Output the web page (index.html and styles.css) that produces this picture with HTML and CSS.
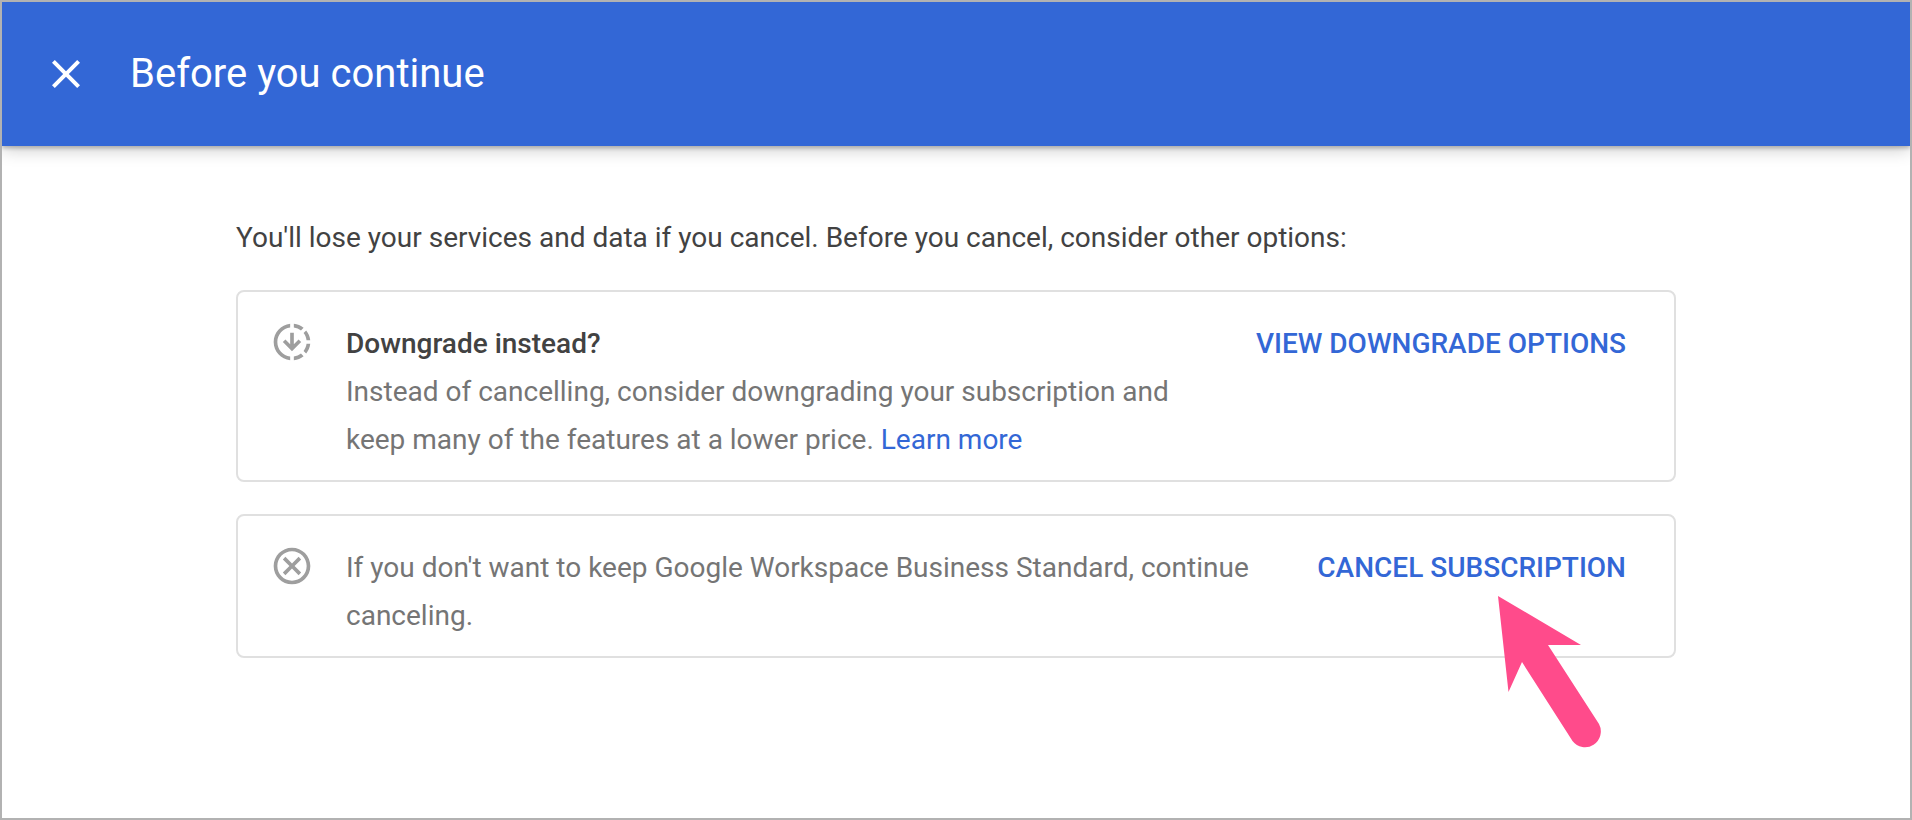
FILE: index.html
```
<!DOCTYPE html>
<html lang="en">
<head>
    <meta charset="UTF-8">
    <meta name="viewport" content="width=device-width, initial-scale=1.0">
    <title>Before you continue</title>
    <link rel="stylesheet" href="styles.css">
</head>
<body>
    <header class="header">
        <button class="close-button" type="button" aria-label="Close">
            <svg viewBox="0 0 24 24" aria-hidden="true">
                <path d="M19 6.41L17.59 5 12 10.59 6.41 5 5 6.41 10.59 12 5 17.59 6.41 19 12 13.41 17.59 19 19 17.59 13.41 12z"/>
            </svg>
        </button>
        <h1>Before you continue</h1>
    </header>

    <main class="content">
        <p class="intro">You'll lose your services and data if you cancel. Before you cancel, consider other options:</p>

        <!-- Downgrade option -->
        <section class="card">
            <svg class="card-icon" viewBox="0 0 24 24" aria-hidden="true">
                <path d="M18.32 4.26C16.84 3.05 15.01 2.25 13 2.05v2.02c1.46.18 2.79.76 3.9 1.62l1.42-1.43zM19.93 11h2.02c-.2-2.01-1-3.84-2.21-5.32L18.31 7.1c.86 1.11 1.44 2.44 1.62 3.9zM18.31 16.9l1.43 1.43c1.21-1.48 2.01-3.32 2.21-5.32h-2.02c-.18 1.45-.76 2.78-1.62 3.89zM13 19.93v2.02c2.01-.2 3.84-1 5.32-2.21l-1.43-1.43c-1.1.86-2.43 1.44-3.89 1.62zM15.59 10.59L13 13.17V7h-2v6.17l-2.59-2.59L7 12l5 5 5-5-1.41-1.41zM11 19.93v2.02c-5.05-.5-9-4.76-9-9.95s3.95-9.45 9-9.95v2.02C7.05 4.56 4 7.92 4 12s3.05 7.44 7 7.93z"/>
            </svg>
            <div class="card-text downgrade-text">
                <h2>Downgrade instead?</h2>
                <p>Instead of cancelling, consider downgrading your subscription and keep many of the features at a lower price. <a href="#">Learn more</a></p>
            </div>
            <button class="card-action" type="button">VIEW DOWNGRADE OPTIONS</button>
        </section>

        <!-- Cancel option -->
        <section class="card">
            <svg class="card-icon" viewBox="0 0 24 24" aria-hidden="true">
                <path d="M12 2C6.47 2 2 6.47 2 12s4.47 10 10 10 10-4.47 10-10S17.53 2 12 2zm0 18c-4.41 0-8-3.59-8-8s3.59-8 8-8 8 3.59 8 8-3.59 8-8 8zM15.59 7L12 10.59 8.41 7 7 8.41 10.59 12 7 15.59 8.41 17 12 13.41 15.59 17 17 15.59 13.41 12 17 8.41z"/>
            </svg>
            <div class="card-text">
                <p>If you don't want to keep Google Workspace Business Standard, continue canceling.</p>
            </div>
            <button class="card-action" type="button">CANCEL SUBSCRIPTION</button>
            <svg class="pointer" viewBox="0 0 104 154" aria-hidden="true">
                <path d="M0 0L83 49H50L101 128A15.800 15.800 0 0 1 74.500 145L24 66 10.500 96z"/>
            </svg>
        </section>
    </main>
</body>
</html>
```
FILE: styles.css
```
* {
    margin: 0;
    padding: 0;
    box-sizing: border-box;
}

body {
    min-height: 100vh;
    font-family: Roboto, Arial, sans-serif;
    font-size: 28px;
    line-height: 48px;
    color: #424242;
    background: #fff;
    border: 2px solid #b2b2b2;
}

.header {
    display: flex;
    align-items: center;
    gap: 40px;
    height: 144px;
    padding: 0 40px;
    background: #3367d6;
    color: #fff;
    box-shadow: 0 2px 4px rgba(0, 0, 0, 0.24), 0 4px 16px rgba(0, 0, 0, 0.2);
}

.header h1 {
    font-size: 40px;
    font-weight: 400;
}

.close-button {
    width: 48px;
    height: 48px;
    background: none;
    border: none;
    cursor: pointer;
}

.close-button svg {
    display: block;
    width: 48px;
    height: 48px;
    fill: #fff;
}

.content {
    max-width: 1440px;
    margin: 0 auto;
    padding-top: 68px;
}

.intro {
    margin-bottom: 28px;
}

.card {
    position: relative;
    display: flex;
    align-items: flex-start;
    margin-bottom: 32px;
    padding: 28px 32px 16px;
    border: 2px solid #e0e0e0;
    border-radius: 8px;
}

.card-icon {
    flex-shrink: 0;
    width: 44px;
    height: 44px;
    margin-right: 32px;
    fill: #9e9e9e;
}

.card-text {
    flex: 1;
    max-width: 920px;
    color: #757575;
}

.downgrade-text {
    max-width: 840px;
}

.card-text h2 {
    font-size: 28px;
    font-weight: 500;
    color: #424242;
}

.card-text a {
    color: #3367d6;
    text-decoration: none;
}

.card-action {
    margin-left: auto;
    padding: 0 16px;
    font: inherit;
    font-weight: 500;
    color: #3367d6;
    background: none;
    border: none;
    white-space: nowrap;
    cursor: pointer;
}

.pointer {
    position: absolute;
    top: 80px;
    right: 72px;
    width: 104px;
    height: 154px;
    fill: #ff4b8b;
}
```
